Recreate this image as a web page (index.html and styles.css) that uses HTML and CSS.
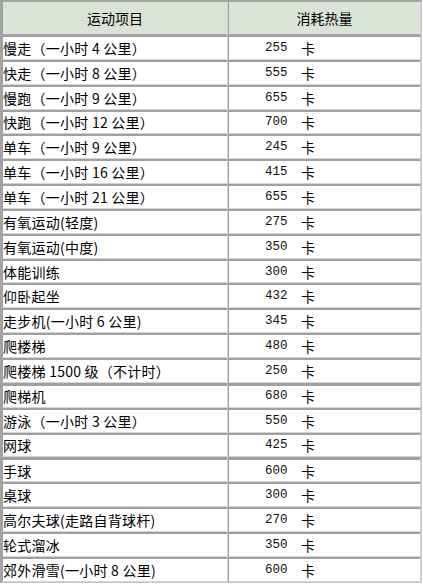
FILE: index.html
```html
<!DOCTYPE html>
<html>
<head>
<meta charset="utf-8">
<link rel="stylesheet" href="styles.css">
</head>
<body>
<table class="tbl">
  <thead>
    <tr class="head"><th class="c1">运动项目</th><th class="c2">消耗热量</th></tr>
  </thead>
  <tbody>
    <tr><td class="c1">慢走（一小时 4 公里）</td><td class="c2"><span class="num">255</span><span class="unit">卡</span></td></tr>
    <tr><td class="c1">快走（一小时 8 公里）</td><td class="c2"><span class="num">555</span><span class="unit">卡</span></td></tr>
    <tr><td class="c1">慢跑（一小时 9 公里）</td><td class="c2"><span class="num">655</span><span class="unit">卡</span></td></tr>
    <tr><td class="c1">快跑（一小时 12 公里）</td><td class="c2"><span class="num">700</span><span class="unit">卡</span></td></tr>
    <tr><td class="c1">单车（一小时 9 公里）</td><td class="c2"><span class="num">245</span><span class="unit">卡</span></td></tr>
    <tr><td class="c1">单车（一小时 16 公里）</td><td class="c2"><span class="num">415</span><span class="unit">卡</span></td></tr>
    <tr><td class="c1">单车（一小时 21 公里）</td><td class="c2"><span class="num">655</span><span class="unit">卡</span></td></tr>
    <tr><td class="c1">有氧运动(轻度)</td><td class="c2"><span class="num">275</span><span class="unit">卡</span></td></tr>
    <tr><td class="c1">有氧运动(中度)</td><td class="c2"><span class="num">350</span><span class="unit">卡</span></td></tr>
    <tr><td class="c1">体能训练</td><td class="c2"><span class="num">300</span><span class="unit">卡</span></td></tr>
    <tr><td class="c1">仰卧起坐</td><td class="c2"><span class="num">432</span><span class="unit">卡</span></td></tr>
    <tr><td class="c1">走步机(一小时 6 公里)</td><td class="c2"><span class="num">345</span><span class="unit">卡</span></td></tr>
    <tr><td class="c1">爬楼梯</td><td class="c2"><span class="num">480</span><span class="unit">卡</span></td></tr>
    <tr><td class="c1">爬楼梯 1500 级（不计时）</td><td class="c2"><span class="num">250</span><span class="unit">卡</span></td></tr>
    <tr class="thick"><td class="c1">爬梯机</td><td class="c2"><span class="num">680</span><span class="unit">卡</span></td></tr>
    <tr><td class="c1">游泳（一小时 3 公里）</td><td class="c2"><span class="num">550</span><span class="unit">卡</span></td></tr>
    <tr><td class="c1">网球</td><td class="c2"><span class="num">425</span><span class="unit">卡</span></td></tr>
    <tr class="thick"><td class="c1">手球</td><td class="c2"><span class="num">600</span><span class="unit">卡</span></td></tr>
    <tr><td class="c1">桌球</td><td class="c2"><span class="num">300</span><span class="unit">卡</span></td></tr>
    <tr><td class="c1">高尔夫球(走路自背球杆)</td><td class="c2"><span class="num">270</span><span class="unit">卡</span></td></tr>
    <tr><td class="c1">轮式溜冰</td><td class="c2"><span class="num">350</span><span class="unit">卡</span></td></tr>
    <tr><td class="c1">郊外滑雪(一小时 8 公里)</td><td class="c2"><span class="num">600</span><span class="unit">卡</span></td></tr>
  </tbody>
</table>
</body>
</html>
```

FILE: styles.css
```css
html, body {
  margin: 0;
  padding: 0;
  background: #ffffff;
}

.tbl {
  width: 422px;
  border-collapse: separate;
  border-spacing: 0;
  border-top: 2px solid #a3a3a3;
  border-left: 2px solid #a3a3a3;
  border-right: 1px solid #c4c4c4;
  border-bottom: 1px solid #c4c4c4;
  font-family: "Noto Sans CJK SC", sans-serif;
  font-size: 14px;
  color: #000;
  table-layout: fixed;
}

.tbl th,
.tbl td {
  padding: 0;
  border-top: 2px solid #a0a0a0;
  border-left: 1px solid #a0a0a0;
  border-right: 1px solid #d4d4d4;
  border-bottom: 1px solid #d4d4d4;
  height: 21.85px;
  line-height: 18px;
  white-space: nowrap;
  overflow: hidden;
  box-sizing: content-box;
  vertical-align: middle;
}

.tbl thead th {
  border-top: 0;
  background: #d9e4d6;
  font-weight: normal;
  text-align: center;
  height: 32px;
  border-bottom: 1px solid #a8a8a8;
}

.tbl th.c1,
.tbl td.c1 {
  width: 224px;
}

.tbl td.c1 {
  letter-spacing: 0.25px;
}

.tbl td.c2 {
  padding-left: 36px;
}

.num {
  display: inline-block;
  vertical-align: top;
  width: 22px;
  line-height: 18px;
  font-family: "Liberation Mono", "DejaVu Sans Mono", monospace;
  font-size: 12.5px;
  color: #111;
}

.unit {
  display: inline-block;
  vertical-align: top;
  line-height: 18px;
  margin-left: 14px;
}

.tbl tr.thick td {
  border-top: 3px solid #a0a0a0;
  height: 20.85px;
}
```
